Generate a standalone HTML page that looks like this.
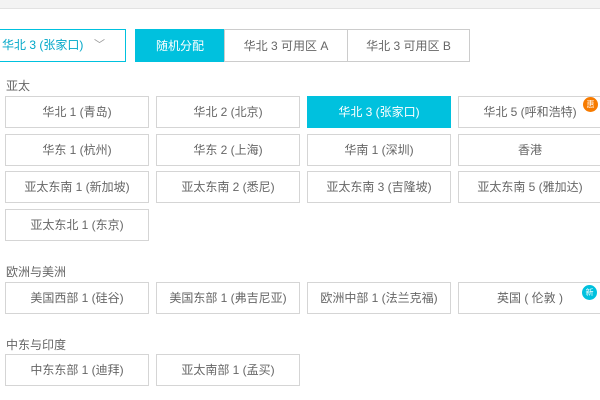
<!DOCTYPE html>
<html><head><meta charset="utf-8"><style>
body{margin:0;width:600px;height:400px;background:#fff;font-family:"Liberation Sans","Noto Sans CJK SC",sans-serif;font-size:12px;color:#666;position:relative;overflow:hidden}
.top{position:absolute;left:0;top:0;width:600px;height:8px;background:#f3f3f3;border-bottom:1px solid #e2e2e2}
.dd{position:absolute;left:-2px;top:29px;width:128px;border:1px solid #00c1de;color:#00a7c8;line-height:31px;padding-left:3px;box-sizing:border-box;height:33px}
.dd span{position:absolute;left:95px;top:0;color:#999;font-size:11px}
.tab{position:absolute;top:29px;height:33px;line-height:33px;text-align:center;border:1px solid #ccc;box-sizing:border-box;color:#666}
.lbl{position:absolute;left:6px;color:#666}
.b{position:absolute;width:144px;height:32px;line-height:30px;text-align:center;border:1px solid #d5d5d5;box-sizing:border-box;color:#666;background:#fff}
.b.on{background:#00c1de;border-color:#00c1de;color:#fff}
.bd{position:absolute;width:15px;height:15px;border-radius:50%;color:#fff;font-size:8px;line-height:15px;text-align:center}
</style></head><body>
<div class="top"></div>
<div class="dd">华北 3 (张家口)<span>﹀</span></div>
<div class="tab" style="left:135px;width:90px;background:#00c1de;border-color:#00c1de;color:#fff">随机分配</div>
<div class="tab" style="left:224px;width:124px">华北 3 可用区 A</div>
<div class="tab" style="left:347px;width:123px">华北 3 可用区 B</div>
<div class="lbl" style="top:77px">亚太</div>
<div class="b" style="left:5px;top:96px">华北 1 (青岛)</div>
<div class="b" style="left:156px;top:96px">华北 2 (北京)</div>
<div class="b on" style="left:307px;top:96px">华北 3 (张家口)</div>
<div class="b" style="left:458px;top:96px">华北 5 (呼和浩特)</div>
<div class="b" style="left:5px;top:134px">华东 1 (杭州)</div>
<div class="b" style="left:156px;top:134px">华东 2 (上海)</div>
<div class="b" style="left:307px;top:134px">华南 1 (深圳)</div>
<div class="b" style="left:458px;top:134px">香港</div>
<div class="b" style="left:5px;top:171px">亚太东南 1 (新加坡)</div>
<div class="b" style="left:156px;top:171px">亚太东南 2 (悉尼)</div>
<div class="b" style="left:307px;top:171px">亚太东南 3 (吉隆坡)</div>
<div class="b" style="left:458px;top:171px">亚太东南 5 (雅加达)</div>
<div class="b" style="left:5px;top:209px">亚太东北 1 (东京)</div>
<div class="lbl" style="top:263px">欧洲与美洲</div>
<div class="b" style="left:5px;top:282px">美国西部 1 (硅谷)</div>
<div class="b" style="left:156px;top:282px">美国东部 1 (弗吉尼亚)</div>
<div class="b" style="left:307px;top:282px">欧洲中部 1 (法兰克福)</div>
<div class="b" style="left:458px;top:282px">英国 ( 伦敦 )</div>
<div class="lbl" style="top:336px">中东与印度</div>
<div class="b" style="left:5px;top:354px">中东东部 1 (迪拜)</div>
<div class="b" style="left:156px;top:354px">亚太南部 1 (孟买)</div>
<div class="bd" style="left:583px;top:97px;background:#f77b00">惠</div>
<div class="bd" style="left:582px;top:285px;background:#00c1de">新</div>
</body></html>
